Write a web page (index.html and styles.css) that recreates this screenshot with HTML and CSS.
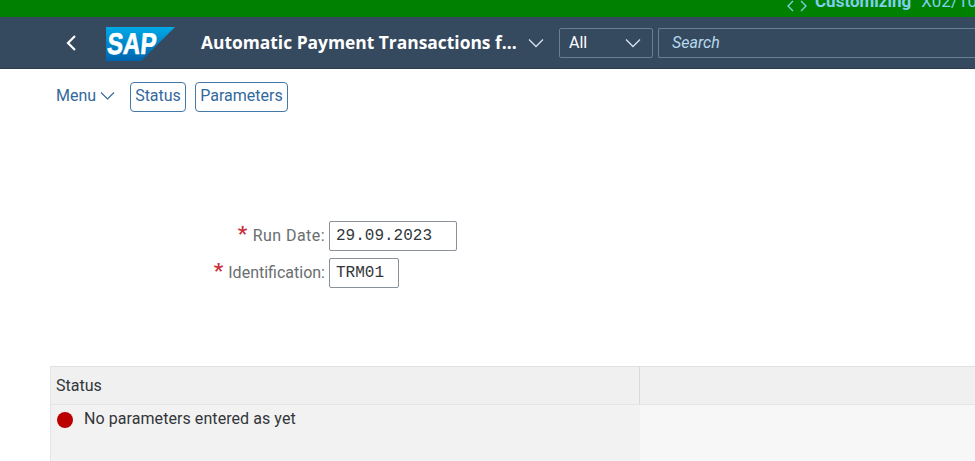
FILE: index.html
```html
<!DOCTYPE html>
<html lang="en">
<head>
<meta charset="utf-8">
<title>Automatic Payment Transactions</title>
<link rel="stylesheet" href="styles.css">
</head>
<body>
<div class="system-bar">
  <svg class="code-icon" width="20" height="12" viewBox="0 0 20 12"><path d="M6 1 1 6l5 5M14 1l5 5-5 5" fill="none" stroke="#7fd0ea" stroke-width="1.3"/></svg>
  <span class="sys-name">Customizing</span>
  <span class="sys-id">X02/100</span>
</div>
<header class="shell">
  <svg class="back" width="12" height="18" viewBox="0 0 12 18"><path d="M10 2 3 9l7 7" fill="none" stroke="#fff" stroke-width="2.2"/></svg>
  <svg class="logo" width="69" height="34" viewBox="0 0 69 34">
    <defs><linearGradient id="sapg" x1="0" y1="0" x2="0" y2="1"><stop offset="0" stop-color="#00a9e6"/><stop offset="1" stop-color="#0063ae"/></linearGradient></defs>
    <polygon points="0,0 69,0 35,34 0,34" fill="url(#sapg)"/>
    <text x="3" y="27.5" class="logo-text" textLength="49" lengthAdjust="spacingAndGlyphs">SAP</text>
  </svg>
  <div class="title">Automatic Payment Transactions f...</div>
  <svg class="chev title-chev" width="16" height="10" viewBox="0 0 16 10"><path d="M1 1.5 8 8.5l7-7" fill="none" stroke="#d5e3ef" stroke-width="1.3"/></svg>
  <div class="scope">
    <span>All</span>
    <svg class="chev" width="16" height="10" viewBox="0 0 16 10"><path d="M1 1.5 8 8.5l7-7" fill="none" stroke="#d5e3ef" stroke-width="1.3"/></svg>
  </div>
  <div class="search">Search</div>
</header>
<nav class="toolbar">
  <span class="menu">Menu
    <svg width="15" height="9" viewBox="0 0 15 9"><path d="M1 1.5 7.500 8 14 1.500" fill="none" stroke="#32689c" stroke-width="1.100"/></svg>
  </span>
  <button class="btn btn-status">Status</button>
  <button class="btn btn-params">Parameters</button>
</nav>
<main class="form">
  <label class="label label-date"><span class="req">*</span>Run Date:</label>
  <div class="input input-date">29.09.2023</div>
  <label class="label"><span class="req">*</span>Identification:</label>
  <div class="input input-id">TRM01</div>
</main>
<section class="table">
  <div class="th th-first">Status</div>
  <div class="th"></div>
  <div class="td td-first"><span class="dot"></span>No parameters entered as yet</div>
  <div class="td td-rest"></div>
</section>
</body>
</html>
```
FILE: styles.css
```css
* { box-sizing: border-box; }
html, body { margin: 0; height: 100%; overflow: hidden; background: #fff; }
body { width: 975px; height: 461px; font-family: Roboto, "Open Sans", sans-serif; color: #32363a; }

.system-bar { height: 17px; background: #008000; display: flex; align-items: flex-end; padding-left: 787px; white-space: nowrap; overflow: hidden; line-height: 22px; }
.code-icon { flex: none; margin-bottom: 5px; margin-right: 8px; }
.sys-name { font-size: 17px; font-weight: 700; color: #7fd0ea; margin-right: 10px; margin-bottom: 5px; flex: none; }
.sys-id { font-size: 17px; color: #7fd0ea; flex: none; margin-bottom: 5px; }

.shell { height: 52px; background: #354a5f; display: flex; align-items: center; padding-left: 65px; border-bottom: 1px solid #2c3e50; }
.back { flex: none; margin-right: 29px; }
.logo { flex: none; margin: 3px 26px 0 0; }
.logo-text { font: 700 30px "Liberation Sans", sans-serif; fill: #fff; stroke: #fff; stroke-width: .7px; transform: skewX(-5deg); }
.title { flex: none; width: 327px; padding-bottom: 2px; color: #fff; font: 700 17.4px "Open Sans", sans-serif; white-space: nowrap; }
.chev { flex: none; }
.title-chev { margin-right: 15px; }
.scope { flex: none; width: 94px; height: 30px; border: 1px solid #6b7f93; border-radius: 2px; display: flex; align-items: center; justify-content: space-between; padding: 0 11px 0 9px; color: #fff; font-size: 16px; margin-right: 5px; }
.search { flex: none; width: 330px; height: 30px; border: 1px solid #6b7f93; border-right: none; border-radius: 2px 0 0 2px; display: flex; align-items: center; padding-left: 13px; color: #b8d8ee; font-size: 16px; font-style: italic; }

.toolbar { display: flex; align-items: center; padding: 13px 0 0 56px; height: 43px; }
.menu { display: flex; align-items: center; gap: 4px; font-size: 16px; color: #32689c; width: 74px; flex: none; line-height: 16px; padding-bottom: 3px; }
.btn { font: 16px Roboto, "Open Sans", sans-serif; color: #32689c; background: #fff; border: 1px solid #4279aa; border-radius: 4px; height: 30px; padding: 0 0 3px; margin-right: 9px; white-space: nowrap; }
.btn-status { width: 56px; }
.btn-params { width: 93px; }

.form { display: grid; grid-template-columns: 276px auto; justify-content: start; justify-items: start; align-items: center; row-gap: 7px; margin: 109px 0 0 53px; }
.label { justify-self: end; margin-right: 4px; padding-bottom: 2px; font-size: 16px; color: #6a6d70; white-space: nowrap; }
.label-date { letter-spacing: .45px; }
.req { color: #c8323c; font-weight: 700; font-size: 21px; line-height: 14px; margin-right: 5px; }
.input { height: 30px; border: 1px solid #89919a; border-radius: 2px; font: 16px "Liberation Mono", monospace; color: #32363a; display: flex; align-items: center; padding: 0 0 1px 6px; }
.input-date { width: 128px; }
.input-id { width: 70px; }

.table { position: absolute; left: 50px; top: 366px; width: 925px; height: 95px; display: grid; grid-template-columns: 589px 1fr; grid-template-rows: 38px 1fr; border-left: 1px solid #e5e5e5; border-top: 1px solid #e0e0e0; background: #f2f2f2; }
.th { background: #f0f0f0; border-bottom: 1px solid #e5e5e5; display: flex; align-items: center; padding-left: 5px; font-size: 16px; color: #32363a; }
.th-first { border-right: 1px solid #d9d9d9; padding-bottom: 1px; }
.td { font-size: 16px; }
.td-first { background: #f2f2f2; display: flex; align-items: flex-start; padding: 4px 0 0 6px; letter-spacing: .07px; color: #32363a; }
.td-rest { background: #f7f7f7; }
.dot { flex: none; width: 16px; height: 16px; border-radius: 50%; background: #bb0000; margin: 3px 11px 0 0; }
```
